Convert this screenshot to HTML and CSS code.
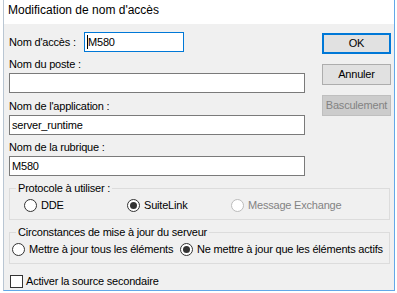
FILE: index.html
```html
<!DOCTYPE html>
<html lang="fr">
<head>
<meta charset="utf-8">
<title>Modification de nom d'accès</title>
<link rel="stylesheet" href="styles.css">
</head>
<body>
<div class="window">
  <div class="titlebar">Modification de nom d'accès</div>
  <div class="body">
    <div class="top">
      <div class="fields">
        <div class="row1">
          <span class="acc-label">Nom d'accès :</span>
          <div class="field focus"><span class="caret"></span>M580</div>
        </div>
        <div class="fld">
          <div class="label">Nom du poste :</div>
          <div class="field"></div>
        </div>
        <div class="fld app">
          <div class="label">Nom de l'application :</div>
          <div class="field">server_runtime</div>
        </div>
        <div class="fld">
          <div class="label">Nom de la rubrique :</div>
          <div class="field">M580</div>
        </div>
      </div>
      <div class="buttons">
        <button class="btn default">OK</button>
        <button class="btn">Annuler</button>
        <button class="btn dis">Basculement</button>
      </div>
    </div>
    <fieldset class="box">
      <legend>Protocole à utiliser :</legend>
      <div class="opts proto">
        <div class="radio r1"><span class="rad"></span><span>DDE</span></div>
        <div class="radio r2"><span class="rad on"></span><span>SuiteLink</span></div>
        <div class="radio dis"><span class="rad off"></span><span>Message Exchange</span></div>
      </div>
    </fieldset>
    <fieldset class="box">
      <legend>Circonstances de mise à jour du serveur</legend>
      <div class="opts maj">
        <div class="radio m1"><span class="rad"></span><span>Mettre à jour tous les éléments</span></div>
        <div class="radio"><span class="rad on"></span><span>Ne mettre à jour que les éléments actifs</span></div>
      </div>
    </fieldset>
    <div class="check"><span class="cb"></span><span>Activer la source secondaire</span></div>
  </div>
</div>
</body>
</html>
```
FILE: styles.css
```css
html, body {
  margin: 0;
  background: #ffffff;
}
body {
  font-family: "Liberation Sans", Arial, sans-serif;
  font-size: 11px;
  color: #000;
}
.window {
  margin-left: 3px;
  width: 392px;
  height: 291px;
  box-sizing: border-box;
  border-left: 1px solid #b9c6d3;
  border-right: 1px solid #62a8e8;
  border-bottom: 1px solid #62a8e8;
  display: flex;
  flex-direction: column;
}
.titlebar {
  flex: none;
  height: 24px;
  background: #fff;
  padding-left: 4px;
  font-size: 12px;
  line-height: 21px;
}
.body {
  flex: 1;
  background: #f0f0f0;
  padding: 8px 3px 0 5px;
  letter-spacing: -0.2px;
}
.top {
  display: flex;
  gap: 17px;
}
.fields {
  width: 296px;
  display: flex;
  flex-direction: column;
}
.row1 {
  display: flex;
  align-items: center;
}
.acc-label {
  width: 75px;
  flex: none;
}
.fld {
  margin-top: 5px;
}
.fld.app {
  margin-top: 6px;
}
.label {
  line-height: 14px;
  margin-bottom: 2px;
}
.field {
  height: 20px;
  box-sizing: border-box;
  border: 1px solid #7a7a7a;
  background: #fff;
  padding-left: 2px;
  line-height: 18px;
  white-space: nowrap;
}
.field.focus {
  width: 100px;
  border-color: #0078d7;
  display: flex;
  align-items: center;
}
.caret {
  width: 1px;
  height: 14px;
  background: #000;
  flex: none;
}
.buttons {
  width: 69px;
  margin-top: 1px;
  display: flex;
  flex-direction: column;
  gap: 10px;
}
.btn {
  height: 21px;
  box-sizing: border-box;
  border: 1px solid #adadad;
  background: #e1e1e1;
  font: inherit;
  letter-spacing: inherit;
  color: #000;
  padding: 0;
  text-align: center;
  line-height: 19px;
}
.btn.default {
  border: 2px solid #0078d7;
  line-height: 17px;
}
.btn.dis {
  background: #cccccc;
  border-color: #bfbfbf;
  color: #838383;
}
.box {
  margin: 6px 0 0 0;
  padding: 0 0 7px 0;
  width: 381px;
  box-sizing: border-box;
  border: 1px solid #dcdcdc;
  min-inline-size: 0;
}
.box legend {
  margin-left: 6px;
  padding: 0 2px;
  line-height: 13px;
}
.opts {
  display: flex;
  align-items: center;
  height: 14px;
  margin-top: 3px;
}
.opts.proto {
  padding-left: 14px;
}
.opts.maj {
  padding-left: 2px;
}
.radio {
  display: flex;
  align-items: center;
  gap: 4px;
  white-space: nowrap;
}
.r1 { width: 103px; }
.r2 { width: 104px; }
.m1 { width: 168px; }
.radio.dis {
  color: #838383;
}
.rad {
  width: 13px;
  height: 13px;
  box-sizing: border-box;
  border: 1px solid #333;
  border-radius: 50%;
  background: #fff;
  flex: none;
  display: flex;
  align-items: center;
  justify-content: center;
}
.rad.on::after {
  content: "";
  width: 7px;
  height: 7px;
  border-radius: 50%;
  background: #333;
}
.rad.off {
  border-color: #bcbcbc;
}
.check {
  margin-top: 10px;
  margin-left: 1px;
  display: flex;
  align-items: center;
  gap: 3px;
  height: 14px;
}
.cb {
  width: 13px;
  height: 13px;
  box-sizing: border-box;
  border: 1px solid #333;
  background: #fff;
  flex: none;
}
```
